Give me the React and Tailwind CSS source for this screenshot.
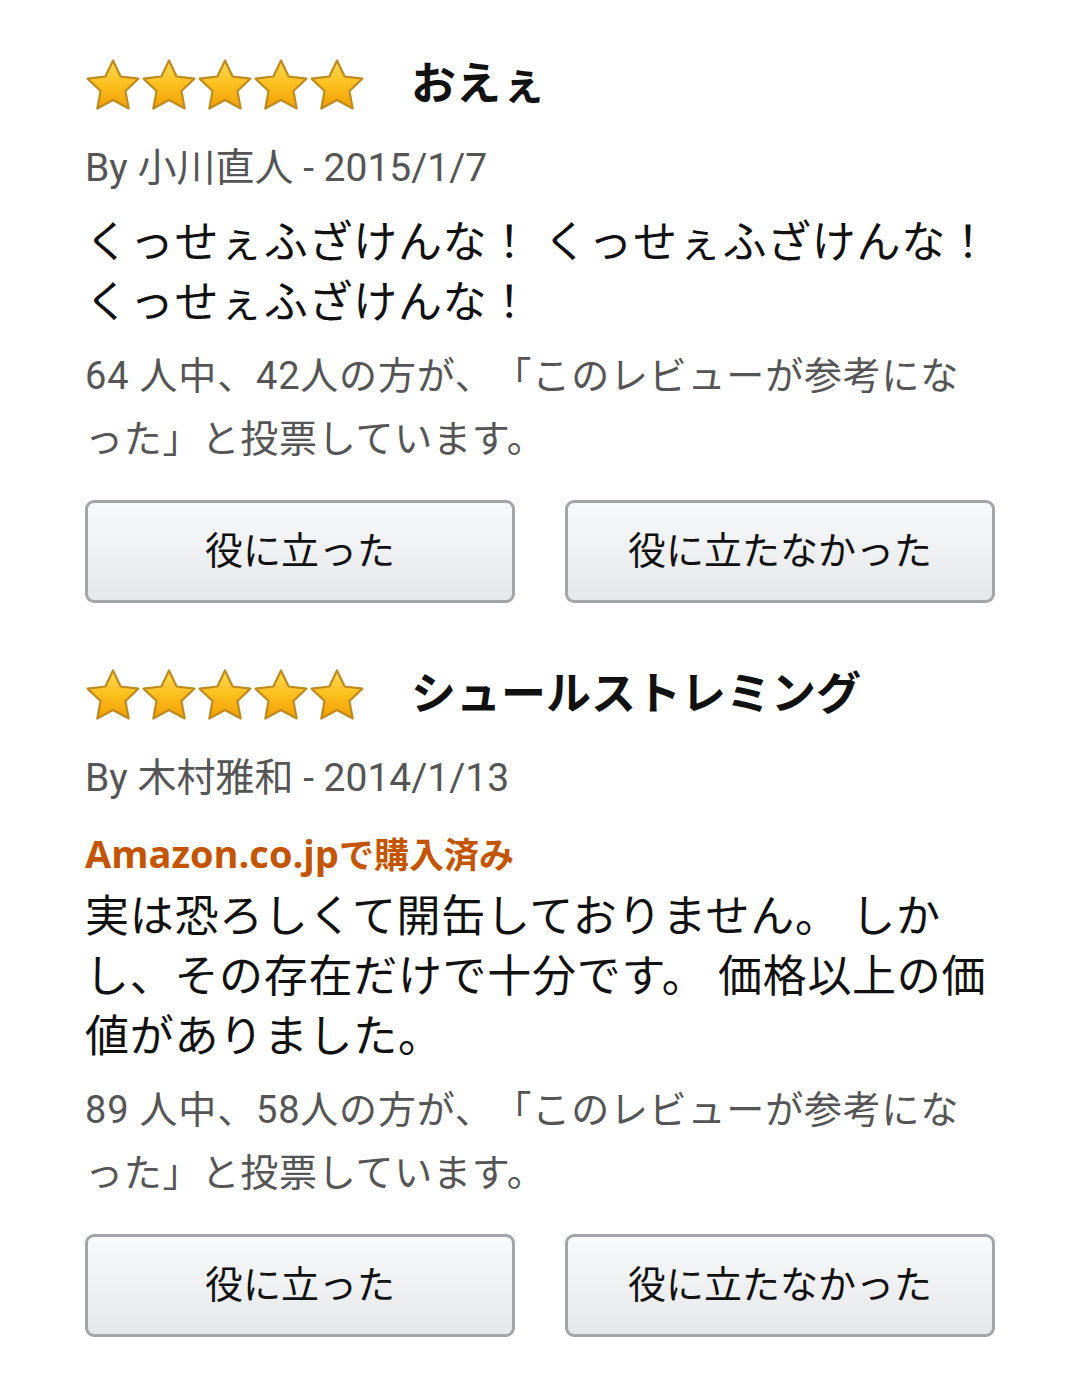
import React from 'react';

const reviews = [
  {
    id: 1,
    title: 'おえぇ',
    author: '小川直人',
    date: '2015/1/7',
    verified: false,
    body: 'くっせぇふざけんな！ くっせぇふざけんな！ くっせぇふざけんな！',
    total: 64,
    helpful: 42,
  },
  {
    id: 2,
    title: 'シュールストレミング',
    author: '木村雅和',
    date: '2014/1/13',
    verified: true,
    body: '実は恐ろしくて開缶しておりません。 しかし、その存在だけで十分です。 価格以上の価値がありました。',
    total: 89,
    helpful: 58,
  },
];

// fat five-point star, fills the whole box so the five sit edge to edge
function Star({ id }) {
  return (
    <svg width="56" height="53" viewBox="0 0 56 53" className="shrink-0">
      <defs>
        <linearGradient id={id} x1="0" y1="0" x2="0" y2="1">
          <stop offset="0" stopColor="#ffdc55" />
          <stop offset="0.55" stopColor="#fbbc1a" />
          <stop offset="1" stopColor="#f29e05" />
        </linearGradient>
      </defs>
      <path
        d="M28 2.5L35.6 18.5L53.4 20.7L40.4 33L43.7 50.5L28 42L12.3 50.5L15.6 33L2.6 20.7L20.4 18.5Z"
        fill={`url(#${id})`}
        stroke="#bf8a1e"
        strokeWidth="2.2"
        strokeLinejoin="round"
      />
    </svg>
  );
}

function Stars({ reviewId }) {
  return (
    <div className="flex items-center">
      {[0, 1, 2, 3, 4].map(i => (
        <Star key={i} id={`star-${reviewId}-${i}`} />
      ))}
    </div>
  );
}

function VoteButton({ children }) {
  return (
    <button className="h-[103px] flex-1 rounded-[9px] border-[3px] border-[#a3a5a8] bg-gradient-to-b from-[#f8f9fa] to-[#e5e7ea] text-[38px] text-[#111]">
      {children}
    </button>
  );
}

function Review({ review }) {
  return (
    <div className="flex flex-col">
      <div className="flex items-center h-[56px]">
        <Stars reviewId={review.id} />
        <h3 className="ml-[46px] text-[45px] font-bold text-[#111] leading-none">{review.title}</h3>
      </div>
      <p className="mt-[30px] text-[39px] leading-[52px] text-[#555]">
        By {review.author} - {review.date}
      </p>
      {review.verified && (
        <p
          className="mt-[28px] text-[35px] leading-[42px] font-bold text-[#c45500]"
          style={{ fontFamily: "'Open Sans', 'Noto Sans CJK JP', sans-serif" }}
        >
          <span className="text-[38px]">Amazon.co.jp</span>で購入済み
        </p>
      )}
      <p className={`${review.verified ? 'mt-[11px]' : 'mt-[19px]'} text-[44px] leading-[60px] tracking-[0.7px] text-[#111]`}>
        {review.body}
      </p>
      <p className="mt-[12px] text-[38px] leading-[63px] tracking-[0.8px] text-[#555]">
        {review.total} 人中、{review.helpful}人の方が、「このレビューが参考になった」と投票しています。
      </p>
      <div className="mt-[29px] flex gap-[50px]">
        <VoteButton>役に立った</VoteButton>
        <VoteButton>役に立たなかった</VoteButton>
      </div>
    </div>
  );
}

export default function App() {
  return (
    <div
      className="min-h-screen bg-white px-[85px] pt-[56px] pb-[48px] [text-spacing-trim:space-all]"
      style={{ fontFamily: "Roboto, 'Noto Sans CJK JP', sans-serif" }}
    >
      <div className="flex flex-col gap-[63px]">
        {reviews.map(review => (
          <Review key={review.id} review={review} />
        ))}
      </div>
    </div>
  );
}
